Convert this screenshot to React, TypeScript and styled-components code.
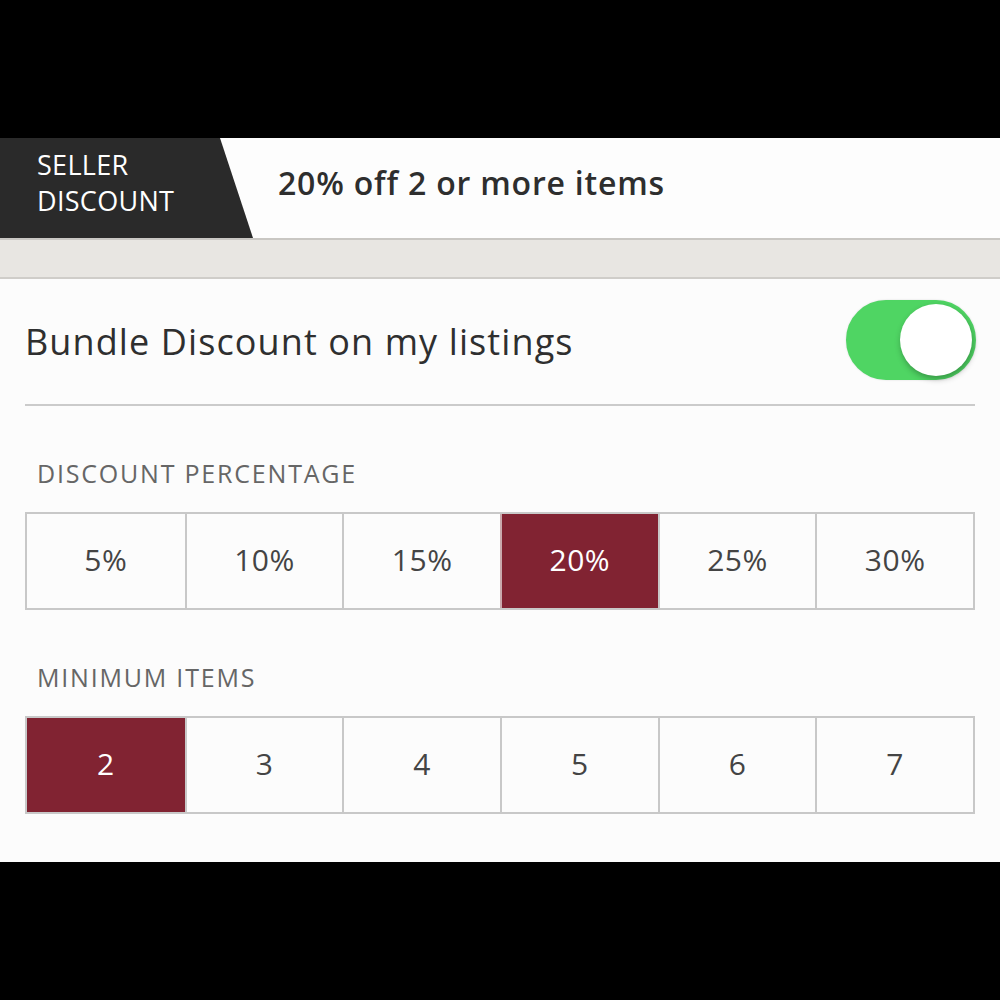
import { useState } from 'react';
import styled, { createGlobalStyle } from 'styled-components';

const GlobalStyle = createGlobalStyle`
  html, body {
    margin: 0;
    padding: 0;
    background: #000;
  }
  * {
    box-sizing: border-box;
  }
`;

const Screen = styled.div`
  width: 1000px;
  height: 1000px;
  background: #000;
  padding-top: 138px;
  font-family: 'Open Sans', Lato, sans-serif;
`;

const Panel = styled.div`
  height: 724px;
  background: #fcfcfc;
  display: flex;
  flex-direction: column;
`;

const Header = styled.header`
  height: 102px;
  display: flex;
  align-items: stretch;
  background: #fdfdfd;
  border-bottom: 2px solid #c9c7c3;
`;

const Tag = styled.div`
  width: 253px;
  flex-shrink: 0;
  background: #2a2a2a;
  clip-path: polygon(0 0, 220px 0, 253px 100%, 0 100%);
  color: #fff;
  font-size: 27px;
  line-height: 36px;
  padding: 9px 0 0 37px;
  text-transform: uppercase;
  letter-spacing: 0.3px;
`;

const Summary = styled.div`
  display: flex;
  align-items: center;
  padding-left: 25px;
  padding-bottom: 12px;
  font-size: 32px;
  font-weight: 600;
  letter-spacing: 0.8px;
  color: #2e2e2e;
`;

const Band = styled.div`
  height: 39px;
  background: #e8e6e2;
  border-bottom: 2px solid #cfcdc9;
`;

const Content = styled.section`
  padding: 0 25px;
  display: flex;
  flex-direction: column;
`;

const SettingRow = styled.div`
  height: 127px;
  display: flex;
  align-items: center;
  justify-content: space-between;
  border-bottom: 2px solid #cbcbcb;
  padding-bottom: 4px;
`;

const SettingLabel = styled.span`
  font-size: 36px;
  letter-spacing: 1.1px;
  color: #2f2f2f;
  padding-top: 4px;
`;

const Toggle = styled.button<{ on: boolean }>`
  width: 130px;
  height: 80px;
  margin-right: -1px;
  border-radius: 40px;
  border: 2px solid ${(p) => (p.on ? '#4fd563' : '#e0e0e0')};
  background: ${(p) => (p.on ? '#4fd563' : '#fff')};
  padding: 2px;
  display: flex;
  justify-content: ${(p) => (p.on ? 'flex-end' : 'flex-start')};
  cursor: pointer;
  box-shadow: 0 0 2px rgba(0, 0, 0, 0.15);
`;

const Knob = styled.span`
  width: 72px;
  height: 72px;
  border-radius: 50%;
  background: #fff;
  box-shadow: 1px 3px 6px rgba(0, 0, 0, 0.3);
`;

const SectionTitle = styled.h3`
  margin: 0;
  padding: 50px 0 0 12px;
  height: 106px;
  font-size: 25px;
  font-weight: 400;
  color: #666;
  text-transform: uppercase;
  letter-spacing: 1.8px;
`;

const Options = styled.div`
  display: grid;
  grid-template-columns: repeat(6, 1fr);
  height: 98px;
  border: 2px solid #c8c8c8;
`;

const Option = styled.button<{ selected: boolean }>`
  border: none;
  border-left: 2px solid ${(p) => (p.selected ? '#c9a9ad' : '#c8c8c8')};
  background: ${(p) => (p.selected ? '#812332' : 'transparent')};
  color: ${(p) => (p.selected ? '#fff' : '#444')};
  font-family: inherit;
  font-size: 30px;
  letter-spacing: 0.5px;
  cursor: pointer;
  padding: 0 0 3px;
  &:first-child {
    border-left: none;
  }
`;

const percents = [5, 10, 15, 20, 25, 30];
const counts = [2, 3, 4, 5, 6, 7];

export default function App() {
  const [enabled, setEnabled] = useState(true);
  const [percent, setPercent] = useState(20);
  const [count, setCount] = useState(2);

  return (
    <>
      <GlobalStyle />
      <Screen>
        <Panel>
          <Header>
            <Tag>
              Seller
              <br />
              Discount
            </Tag>
            <Summary>
              {percent}% off {count} or more items
            </Summary>
          </Header>
          <Band />
          <Content>
            <SettingRow>
              <SettingLabel>Bundle Discount on my listings</SettingLabel>
              <Toggle on={enabled} onClick={() => setEnabled(!enabled)}>
                <Knob />
              </Toggle>
            </SettingRow>
            <SectionTitle>Discount Percentage</SectionTitle>
            <Options>
              {percents.map((p) => (
                <Option key={p} selected={p === percent} onClick={() => setPercent(p)}>
                  {p}%
                </Option>
              ))}
            </Options>
            <SectionTitle>Minimum Items</SectionTitle>
            <Options>
              {counts.map((c) => (
                <Option key={c} selected={c === count} onClick={() => setCount(c)}>
                  {c}
                </Option>
              ))}
            </Options>
          </Content>
        </Panel>
      </Screen>
    </>
  );
}
